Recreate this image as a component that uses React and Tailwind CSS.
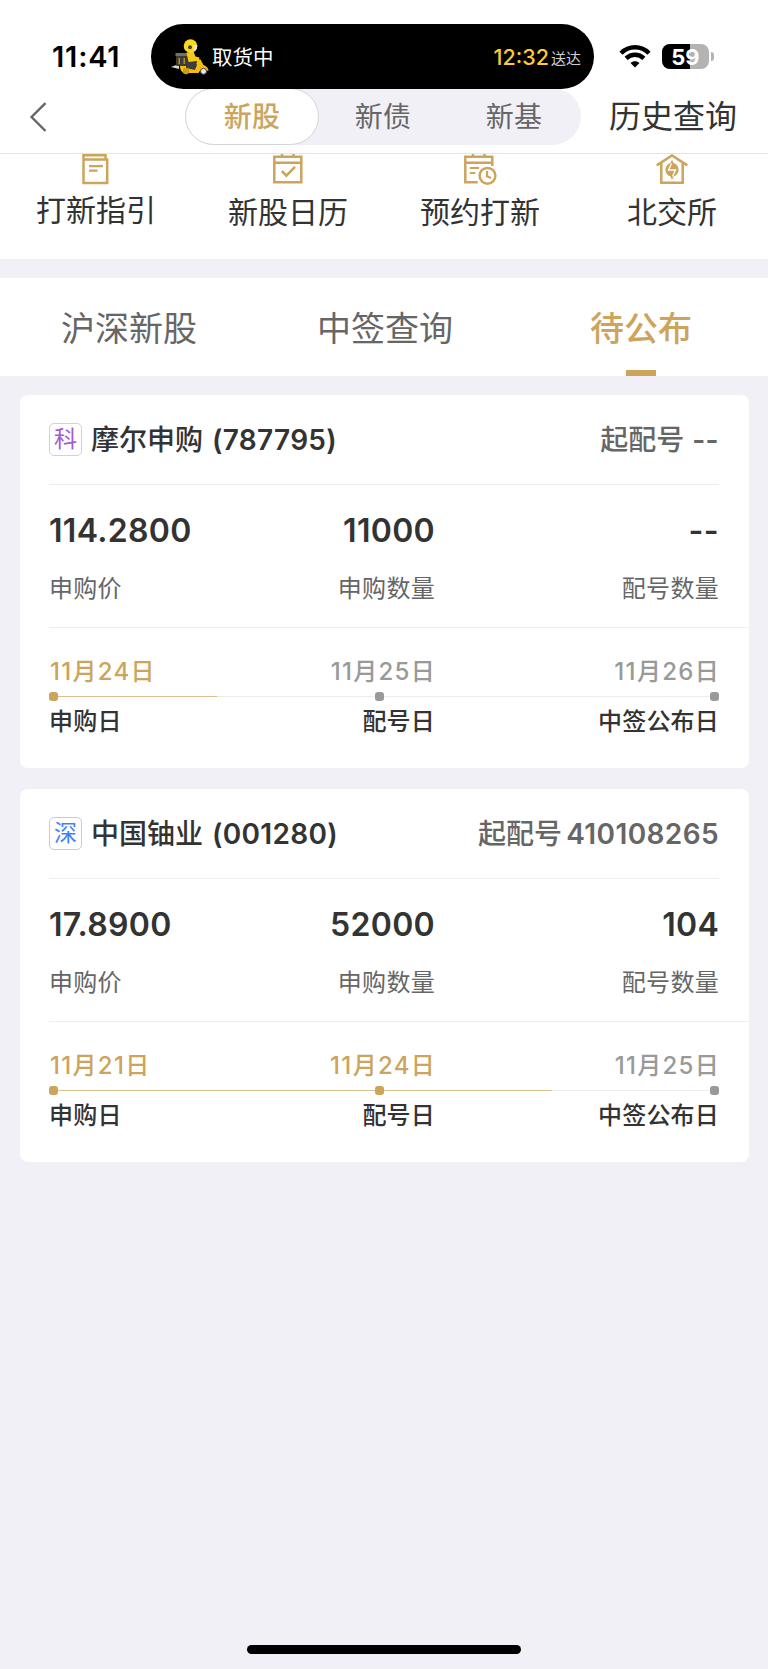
import React from 'react'

const SEGMENTS = ['新股', '新债', '新基']
const SEGMENT_STYLES = [
  'w-[134px] rounded-full border border-[#d4d4d6] bg-white font-medium text-[#cca45c]',
  'w-[128px] text-[#666666]',
  'w-[134px] text-[#666666]',
]

const SHORTCUTS = [
  { label: '打新指引', icon: GuideIcon, gap: 'mt-1' },
  { label: '新股日历', icon: CalendarIcon, gap: 'mt-1.5' },
  { label: '预约打新', icon: ReserveIcon, gap: 'mt-1.5' },
  { label: '北交所', icon: ExchangeIcon, gap: 'mt-1.5' },
]

const TABS = ['沪深新股', '中签查询', '待公布']

const STOCKS = [
  {
    board: '科',
    boardStyle: 'border-[#e0c4f2] text-[#a35ad6]',
    name: '摩尔申购',
    code: '787795',
    startNo: '--',
    startGap: 'gap-2',
    price: '114.2800',
    amount: '11000',
    count: '--',
    progress: 25,
    steps: [
      { date: '11月24日', label: '申购日', done: true },
      { date: '11月25日', label: '配号日', done: false },
      { date: '11月26日', label: '中签公布日', done: false },
    ],
  },
  {
    board: '深',
    boardStyle: 'border-[#b4cdfa] text-[#3e83f7]',
    name: '中国铀业',
    code: '001280',
    startNo: '410108265',
    startGap: 'gap-1',
    price: '17.8900',
    amount: '52000',
    count: '104',
    progress: 75,
    steps: [
      { date: '11月21日', label: '申购日', done: true },
      { date: '11月24日', label: '配号日', done: true },
      { date: '11月25日', label: '中签公布日', done: false },
    ],
  },
]

export default function App() {
  return (
    <div className="flex h-[1669px] w-[768px] flex-col overflow-hidden bg-[#f1f0f6] font-['Inter','Noto_Sans_CJK_SC',sans-serif] text-[#333333]">
      {/* Status bar + nav */}
      <header className="h-[154px] shrink-0 border-b border-[#e4e4e4] bg-white">
        <StatusBar />
        <NavBar />
      </header>

      {/* Shortcuts */}
      <div className="grid h-[105px] shrink-0 grid-cols-4 bg-white">
        {SHORTCUTS.map(({ label, icon: Icon, gap }) => (
          <div key={label} className="flex flex-col items-center">
            <Icon />
            <span className={`text-[30px] leading-[40px] whitespace-nowrap ${gap}`}>{label}</span>
          </div>
        ))}
      </div>

      {/* Tabs */}
      <div className="mt-[19px] grid h-[98px] shrink-0 grid-cols-3 bg-white">
        {TABS.map((tab) => (
          <div
            key={tab}
            className={`relative flex items-center justify-center pt-[3px] pl-0.5 text-[34px] leading-[48px] ${
              tab === '待公布' ? 'font-medium text-[#cca45c]' : 'text-[#666666]'
            }`}
          >
            {tab}
            {tab === '待公布' && <i className="absolute bottom-0 h-1.5 w-[30px] bg-[#cca45c]" />}
          </div>
        ))}
      </div>

      {/* Cards */}
      <main className="mt-[19px] flex flex-col gap-[21px] pr-[19px] pl-5">
        {STOCKS.map((s) => (
          <StockCard key={s.code} stock={s} />
        ))}
      </main>

      <div className="mx-auto mt-auto mb-[15px] h-[9px] w-[274px] rounded-full bg-black" />
    </div>
  )
}

function StatusBar() {
  return (
    <div className="flex h-[88px] items-start">
      <div className="mt-[39px] ml-[52px] w-[99px] text-[29px] leading-[36px] font-semibold tracking-[0.8px] text-black">11:41</div>
      <div className="relative z-10 mt-[24px] flex h-[65px] w-[443px] items-center rounded-full bg-black pr-[13px] pl-5">
        <Courier />
        <span className="ml-[3px] pt-[3px] text-[20.5px] leading-none text-white">取货中</span>
        <span className="ml-auto pt-0.5 text-[21.5px] leading-none font-medium text-[#fccb33]">12:32</span>
        <span className="ml-0.5 pt-[3px] text-[15px] leading-none text-[#cfcfcf]">送达</span>
      </div>
      <svg className="mt-[44px] ml-[25px] h-6 w-8" viewBox="0 0 32 24">
        <g fill="none" stroke="#000" strokeWidth="4.4">
          <path d="M2 9.2C9.8 1.3 22.2 1.3 30 9.2" />
          <path d="M7.1 14.4c5-4.9 12.8-4.9 17.8 0" />
        </g>
        <path fill="#000" d="M16 23.4l-4.5-4.5c2.5-2.3 6.500-2.3 9 0z" />
      </svg>
      <div className="relative mt-[44px] ml-[11px] flex h-[25px] w-[47px] items-center justify-center overflow-hidden rounded-lg bg-[#b3b3b3]">
        <i className="absolute inset-y-0 left-0 w-[28px] bg-black" />
        <span className="relative text-[22px] leading-none font-bold text-white">59</span>
      </div>
      <i className="mt-[52px] ml-0.5 h-[9px] w-[3px] rounded-r-full bg-[#b3b3b3]" />
    </div>
  )
}

function NavBar() {
  return (
    <nav className="flex h-[57px] items-center">
      <svg className="ml-[29px] h-[30px] w-[18px]" viewBox="0 0 18 30" fill="none" stroke="#666" strokeWidth="2.4">
        <path d="M16.5 1.2L2.6 15l13.9 14" />
      </svg>
      <div className="ml-[138px] flex h-[57px] w-[396px] rounded-full bg-[#f1f0f6]">
        {SEGMENTS.map((name, i) => (
          <div
            key={name}
            className={`flex items-center justify-center text-[28px] leading-none tracking-[0.3px] ${SEGMENT_STYLES[i]}`}
          >
            {name}
          </div>
        ))}
      </div>
      <span className="ml-[28px] text-[32px] leading-none whitespace-nowrap">历史查询</span>
    </nav>
  )
}

function StockCard({ stock }) {
  return (
    <section className="flex h-[373px] flex-col rounded-lg bg-white pl-[29px]">
      <div className="mr-[30px] flex h-[90px] items-center border-b border-[#efefef] text-[28px] leading-none font-medium">
        <span className={`flex h-[33px] w-[33px] items-center justify-center rounded-[5px] border text-[23px] leading-none font-normal ${stock.boardStyle}`}>
          {stock.board}
        </span>
        <span className="ml-[9px]">{stock.name}</span>
        <span className="ml-[9px] font-semibold tracking-[0.3px]">({stock.code})</span>
        <span className={`ml-auto flex text-[#666666] ${stock.startGap}`}>
          <span>起配号</span>
          <span className="font-semibold tracking-[0.4px]">{stock.startNo}</span>
        </span>
      </div>

      <div className="grid h-[143px] grid-cols-[193px_193px_284px] border-b border-[#efefef] pt-[26px]">
        <Figure value={stock.price} label="申购价" align="text-left" />
        <Figure value={stock.amount} label="申购数量" align="text-right" />
        <Figure value={stock.count} label="配号数量" align="text-right" />
      </div>

      <Timeline steps={stock.steps} progress={stock.progress} />
    </section>
  )
}

function Figure({ value, label, align }) {
  return (
    <div className={align}>
      <p className="text-[32px] leading-[40px] font-semibold tracking-[0.3px]">{value}</p>
      <p className="mt-[22px] text-[24px] leading-[32px] tracking-[0.3px] text-[#666666]">{label}</p>
    </div>
  )
}

function Timeline({ steps, progress }) {
  return (
    <div className="mr-[30px] pt-[28px] text-[24px] leading-[32px] font-medium">
      <div className="grid grid-cols-[193px_193px_284px] tracking-[1.3px]">
        {steps.map((s, i) => (
          <span key={s.label} className={`${i ? '-mr-px text-right' : 'pl-px'} ${s.done ? 'text-[#cca45c]' : 'text-[#999999]'}`}>
            {s.date}
          </span>
        ))}
      </div>
      <div className="relative mt-1 flex h-[9px] items-center">
        <div className="h-px w-full bg-[#ececec]">
          <div className="h-px bg-[#dcc08c]" style={{ width: `${progress}%` }} />
        </div>
        <Dot done={steps[0].done} place="left-0" />
        <Dot done={steps[1].done} place="left-[326px]" />
        <Dot done={steps[2].done} place="right-0" />
      </div>
      <div className="mt-[5px] grid grid-cols-[193px_193px_284px] tracking-[0.2px]">
        {steps.map((s, i) => (
          <span key={s.label} className={i ? 'text-right' : ''}>{s.label}</span>
        ))}
      </div>
    </div>
  )
}

function Dot({ done, place }) {
  return <i className={`absolute top-0 h-[9px] w-[9px] rounded-[3px] ${place} ${done ? 'bg-[#cca45c]' : 'bg-[#999999]'}`} />
}

function GuideIcon() {
  return (
    <svg className="h-8 w-8" viewBox="0 0 32 32" fill="none" stroke="#cca45c" strokeWidth="2.5">
      <path d="M3.5 5.5V1.2h22v4.3M3.5 5.5h23.7V29H3.5z" />
      <path d="M9 12.2h14M9 16.6h8.5" strokeWidth="2.2" />
    </svg>
  )
}

function CalendarIcon() {
  return (
    <svg className="h-8 w-8" viewBox="0 0 32 32" fill="none" stroke="#cca45c" strokeWidth="2.5">
      <path d="M2.3 2.7h27v25.5h-27zM2.3 8.8h27M10 0v2.5M21.5 0v2.5" />
      <path d="M9.8 17l4.6 4.6 8.6-8.8" />
    </svg>
  )
}

function ReserveIcon() {
  return (
    <svg className="h-8 w-[34px]" viewBox="0 0 34 32" fill="none" stroke="#cca45c" strokeWidth="2.5">
      <path d="M29.3 12V2.7h-27v25.5h12.5M2.3 8.8h27M10 0v2.5M21.5 0v2.5" />
      <path d="M6.8 14H16M6.8 19h5.5" strokeWidth="2.2" />
      <circle cx="24.5" cy="21.8" r="7.9" />
      <path d="M24 17v5.3l4 1.7" strokeWidth="2.2" />
    </svg>
  )
}

function ExchangeIcon() {
  return (
    <svg className="h-8 w-8" viewBox="0 0 32 32" fill="none" stroke="#cca45c" strokeWidth="2.5">
      <path d="M.7 11.4L16 1.5l15.3 9.9M5.3 9v19.8h21.4V9" />
      <path fill="#cca45c" stroke="none" d="M16 5.8l1.600 3.200c2.900 1 5 3.600 5 6.700s-2.100 5.700-5 6.700L16 26l-1.600-3.600c-2.900-1-5-3.600-5-6.700s2.100-5.700 5-6.700z" />
      <path stroke="#fff" strokeWidth="1.3" d="M15.500 9.500l-3 6.500h7l-3 6.500" />
    </svg>
  )
}

// Delivery rider on a scooter, shown in the live activity
function Courier() {
  return (
    <svg className="h-9 w-[38px]" viewBox="0 0 38 36">
      <path fill="#d8d8d8" d="M0 28l8-3v5z" />
      <rect x="5" y="15" width="12" height="12" rx="1" fill="#3f3b30" />
      <path fill="#77705c" d="M4.5 14H17v3H4.5z" />
      <path fill="#a8912e" d="M7.500 19H9v6H7.500zM12.500 19H14v6h-1.500z" />
      <path fill="#f5bd0e" d="M9 27h10l5 2 2.5-9 3 .5 3 5.5c3 1 5 3 5 6l-4-1c-3-1-5 1-6 3H14c-3 0-5-3-5-7z" />
      <path fill="#3d3d3f" d="M15 22l9 .5 2 3.500-2 5-9-2z" />
      <path fill="#f8c916" d="M15.500 13.500l7-1 2 5 4 1-1 3.500-10 1z" />
      <circle cx="15" cy="32" r="3.2" fill="#cf9c0c" />
      <circle cx="32.5" cy="32.3" r="3" fill="#e8e8e8" stroke="#444" strokeWidth="1" />
      <circle cx="19.5" cy="7" r="6.8" fill="#fbd91c" />
      <path fill="#f6e3c8" d="M22 6h4.200c.2 2.800-1 5.600-3.200 6.500z" />
      <circle cx="19" cy="8.3" r="2" fill="#444" />
    </svg>
  )
}
